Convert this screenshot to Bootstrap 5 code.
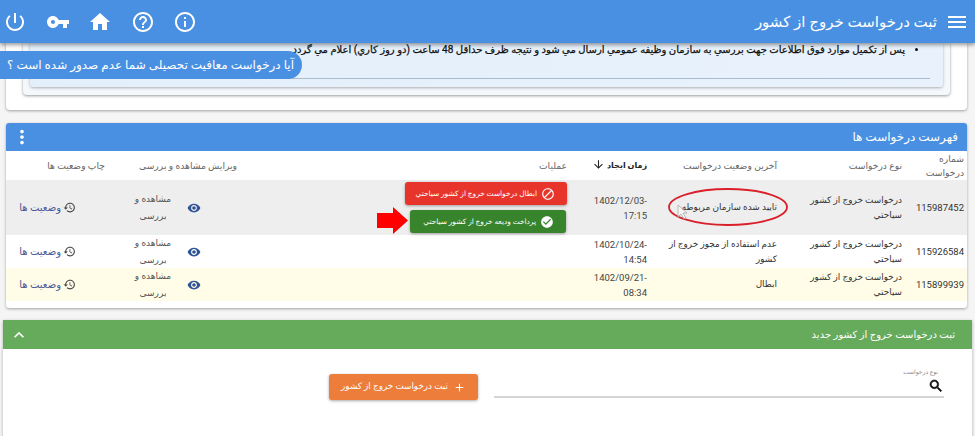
<!DOCTYPE html>
<html lang="fa" dir="rtl">

<head>
    <meta charset="UTF-8">
    <meta name="viewport" content="width=device-width, initial-scale=1.0">
    <title>ثبت درخواست خروج از کشور</title>
    <link href="https://cdn.jsdelivr.net/npm/bootstrap@5.3.0/dist/css/bootstrap.min.css" rel="stylesheet">
    <style>
        html, body {
            height: 436px;
            overflow: hidden;
        }

        body {
            background-color: #f5f5f5;
            color: #333;
            font-family: Roboto, "DejaVu Sans", sans-serif;
            font-size: 10px;
        }

        .icon {
            width: 24px;
            height: 24px;
            fill: currentColor;
            flex: none;
        }

        .app-bar {
            height: 43px;
            background-color: #4a90e2;
            color: #fff;
            box-shadow: 0 2px 4px rgba(0, 0, 0, .4);
            padding: 0 6px 0 3px;
            position: relative;
            z-index: 5;
        }

        .app-bar h1 {
            font-size: 15px;
            font-weight: 400;
            margin: 0 8px 0 0;
        }

        .bar-tools {
            gap: 18.5px;
            margin-right: auto;
            direction: ltr;
        }

        .notice-outer {
            height: 67px;
            margin: 0 8px 0 6px;
            padding: 0 17px 15px 17px;
            background-color: #fff;
            border-radius: 0 0 4px 4px;
            box-shadow: 0 1px 3px rgba(0, 0, 0, .35);
        }

        .notice-mid {
            height: 52px;
            padding: 0 7px 8px 7px;
            background-color: #f4f8fc;
            border-radius: 0 0 4px 4px;
            box-shadow: 0 1px 3px rgba(0, 0, 0, .4);
        }

        .notice-inner {
            height: 44px;
            background: linear-gradient(to left, #e9f2fc, #e3effb);
            border-radius: 0 0 4px 4px;
            box-shadow: 0 1px 3px rgba(0, 0, 0, .3);
            padding: 0 13px 8px 13px;
        }

        .notice-inner ul {
            margin: 0;
            padding: 0 25px 0 0;
            height: 36px;
            border-bottom: 1px solid #a9bccd;
            color: #111;
            font-size: 10px;
            -webkit-text-stroke: .25px #111;
            line-height: 14px;
            white-space: nowrap;
        }

        .ask-pill {
            position: absolute;
            left: 0;
            top: 51px;
            width: 302px;
            height: 28px;
            z-index: 3;
            background-color: #4a90e2;
            color: #fff;
            font-size: 12px;
            border-radius: 0 14px 14px 0;
            padding-right: 8px;
        }

        .list-panel {
            margin: 13px 8px 0 6px;
            height: 185px;
            background-color: #fff;
            border-radius: 3px;
            box-shadow: 0 1px 3px rgba(0, 0, 0, .35);
            overflow: hidden;
        }

        .list-head {
            height: 28px;
            background-color: #4a90e2;
            color: #fff;
            font-size: 12px;
            padding: 0 9px 0 5px;
        }

        .list-head .icon {
            width: 22px;
            height: 22px;
            margin-right: auto;
        }

        .req-table {
            width: 100%;
            table-layout: fixed;
            border-collapse: collapse;
            font-size: 8.9px;
            line-height: 15px;
        }

        .req-table th {
            height: 29px;
            font-size: 9.2px;
            line-height: 14px;
            font-weight: 400;
            color: #666;
            padding: 0 3px;
            text-align: right;
        }

        .req-table th.sorted {
            color: #222;
            font-size: 8px;
            font-weight: 700;
        }

        .req-table th .icon {
            width: 13px;
            height: 13px;
            margin-right: 2px;
            vertical-align: -3px;
        }

        .req-table td {
            padding: 0 3px;
            text-align: right;
            color: #333;
        }

        .req-table td.type-cell {
            padding-left: 14px;
        }

        .row-active td {
            height: 55px;
            background-color: #eeeeee;
        }

        .row-plain td {
            height: 33px;
            background-color: #fff;
        }

        .row-void td {
            height: 33px;
            background-color: #fffde7;
        }

        .status-cell {
            position: relative;
        }

        .req-table .num-cell {
            font-size: 9.5px;
        }

        .req-table .time-cell {
            font-size: 9.5px;
            color: #444;
        }

        .oval-mark {
            position: absolute;
            left: 18px;
            top: 8px;
            width: 120px;
            height: 38px;
            pointer-events: none;
        }

        .op-stack {
            position: relative;
            gap: 5px;
            align-items: flex-start;
        }

        .op-btn {
            height: 23px;
            border: 0;
            border-radius: 3px;
            color: #fff;
            font-size: 7.4px;
            padding: 0 12px 0 4px;
            box-shadow: 0 1px 3px rgba(0, 0, 0, .35);
            gap: 4px;
            white-space: nowrap;
        }

        .op-btn .icon {
            width: 14px;
            height: 14px;
        }

        .op-cancel {
            width: 162px;
            background-color: #e8352b;
        }

        .op-pay {
            width: 156px;
            margin-right: 1px;
            background-color: #37842c;
        }

        .red-arrow {
            position: absolute;
            top: 25px;
            right: 159px;
            width: 31px;
            height: 27px;
        }

        .view-link {
            gap: 14px;
            padding-right: 36px;
        }

        .view-link .icon {
            width: 14px;
            height: 14px;
            color: #2f5597;
        }

        .view-link span {
            width: 40px;
            height: 33px;
            text-align: center;
            font-size: 9px;
            color: #555;
            line-height: 17px;
        }

        .states-link {
            color: #4a5a9a;
            gap: 2px;
            font-size: 10px;
            margin-right: 29px;
        }

        .states-link .icon {
            width: 13px;
            height: 13px;
            color: #444;
        }

        .cursor-mark {
            position: absolute;
            left: 25px;
            top: 24px;
            width: 14px;
            height: 16px;
        }

        .new-panel {
            margin: 12px 3px 0 3px;
            height: 120px;
            background-color: #fff;
            box-shadow: 0 1px 3px rgba(0, 0, 0, .3);
        }

        .new-head {
            height: 29px;
            background-color: #66ab5b;
            color: #fff;
            font-size: 10px;
            font-weight: 500;
            padding: 0 17px 0 6px;
        }

        .new-head .icon {
            width: 20px;
            height: 20px;
            margin-right: auto;
        }

        .new-body {
            padding: 18px 28px 0 0;
            gap: 16px;
        }

        .type-field {
            width: 450px;
            height: 31px;
            border-bottom: 2px solid #d5d5d5;
            position: relative;
        }

        .type-field label {
            font-size: 6px;
            color: #888;
            display: block;
            line-height: 10px;
            padding-right: 6px;
        }

        .type-field .icon {
            position: absolute;
            right: 0;
            top: 11px;
            width: 16px;
            height: 16px;
            color: #111;
        }

        .add-btn {
            width: 149px;
            height: 26px;
            margin-top: 7px;
            border: 0;
            border-radius: 3px;
            background-color: #ed7d3a;
            color: #fff;
            font-size: 8.8px;
            gap: 5px;
            padding: 0 10px;
            box-shadow: 0 1px 3px rgba(0, 0, 0, .35);
            white-space: nowrap;
        }

        .add-btn .icon {
            width: 13px;
            height: 13px;
        }
    </style>
</head>

<body>
    <svg width="0" height="0" class="position-absolute">
        <symbol id="i-power" viewBox="0 0 24 24"><path d="M13 3h-2v10h2V3zm4.83 2.17l-1.42 1.42C17.99 7.86 19 9.81 19 12c0 3.87-3.13 7-7 7s-7-3.13-7-7c0-2.19 1.01-4.14 2.58-5.42L6.17 5.17C4.23 6.82 3 9.26 3 12c0 4.97 4.03 9 9 9s9-4.03 9-9c0-2.74-1.23-5.18-3.17-6.83z"/></symbol>
        <symbol id="i-key" viewBox="0 0 24 24"><path d="M12.65 10C11.83 7.67 9.61 6 7 6c-3.31 0-6 2.69-6 6s2.69 6 6 6c2.61 0 4.83-1.67 5.65-4H17v4h4v-4h2v-4H12.65zM7 14c-1.1 0-2-.9-2-2s.9-2 2-2 2 .9 2 2-.9 2-2 2z"/></symbol>
        <symbol id="i-home" viewBox="0 0 24 24"><path d="M10 20v-6h4v6h5v-8h3L12 3 2 12h3v8z"/></symbol>
        <symbol id="i-help" viewBox="0 0 24 24"><path d="M11 18h2v-2h-2v2zm1-16C6.48 2 2 6.48 2 12s4.48 10 10 10 10-4.48 10-10S17.52 2 12 2zm0 18c-4.41 0-8-3.59-8-8s3.59-8 8-8 8 3.59 8 8-3.59 8-8 8zm0-14c-2.21 0-4 1.79-4 4h2c0-1.1.9-2 2-2s2 .9 2 2c0 2-3 1.75-3 5h2c0-2.25 3-2.5 3-5 0-2.21-1.79-4-4-4z"/></symbol>
        <symbol id="i-info" viewBox="0 0 24 24"><path d="M11 17h2v-6h-2v6zm1-15C6.48 2 2 6.48 2 12s4.48 10 10 10 10-4.48 10-10S17.52 2 12 2zm0 18c-4.41 0-8-3.59-8-8s3.59-8 8-8 8 3.59 8 8-3.59 8-8 8zM11 9h2V7h-2v2z"/></symbol>
        <symbol id="i-menu" viewBox="0 0 24 24"><path d="M3 18h18v-2H3v2zm0-5h18v-2H3v2zm0-7v2h18V6H3z"/></symbol>
        <symbol id="i-more" viewBox="0 0 24 24"><path d="M12 8c1.1 0 2-.9 2-2s-.9-2-2-2-2 .9-2 2 .9 2 2 2zm0 2c-1.1 0-2 .9-2 2s.9 2 2 2 2-.9 2-2-.9-2-2-2zm0 6c-1.1 0-2 .9-2 2s.9 2 2 2 2-.9 2-2-.9-2-2-2z"/></symbol>
        <symbol id="i-eye" viewBox="0 0 24 24"><path d="M12 4.5C7 4.5 2.73 7.61 1 12c1.73 4.39 6 7.5 11 7.5s9.27-3.11 11-7.5c-1.73-4.39-6-7.5-11-7.5zM12 17c-2.76 0-5-2.24-5-5s2.24-5 5-5 5 2.24 5 5-2.24 5-5 5zm0-8c-1.66 0-3 1.34-3 3s1.34 3 3 3 3-1.34 3-3-1.34-3-3-3z"/></symbol>
        <symbol id="i-history" viewBox="0 0 24 24"><path d="M13 3c-4.97 0-9 4.03-9 9H1l3.89 3.89.07.14L9 12H6c0-3.87 3.13-7 7-7s7 3.13 7 7-3.13 7-7 7c-1.93 0-3.68-.79-4.94-2.06l-1.42 1.42C8.27 19.99 10.51 21 13 21c4.97 0 9-4.03 9-9s-4.03-9-9-9zm-1 5v5l4.28 2.54.72-1.21-3.5-2.08V8H12z"/></symbol>
        <symbol id="i-block" viewBox="0 0 24 24"><path d="M12 2C6.48 2 2 6.48 2 12s4.48 10 10 10 10-4.48 10-10S17.52 2 12 2zM4 12c0-4.42 3.58-8 8-8 1.85 0 3.55.63 4.9 1.69L5.69 16.9C4.63 15.55 4 13.85 4 12zm8 8c-1.85 0-3.55-.63-4.9-1.69L18.31 7.1C19.37 8.45 20 10.15 20 12c0 4.42-3.58 8-8 8z"/></symbol>
        <symbol id="i-check" viewBox="0 0 24 24"><path d="M12 2C6.48 2 2 6.48 2 12s4.48 10 10 10 10-4.48 10-10S17.52 2 12 2zm-2 15l-5-5 1.41-1.41L10 14.17l7.59-7.59L19 8l-9 9z"/></symbol>
        <symbol id="i-down" viewBox="0 0 24 24"><path d="M20 12l-1.41-1.41L13 16.17V4h-2v12.17l-5.58-5.58L4 12l8 8 8-8z"/></symbol>
        <symbol id="i-search" viewBox="0 0 24 24"><path d="M15.5 14h-.79l-.28-.27C15.41 12.59 16 11.11 16 9.5 16 5.91 13.09 3 9.5 3S3 5.91 3 9.5 5.91 16 9.5 16c1.61 0 3.09-.59 4.23-1.57l.27.28v.79l5 4.99L20.49 19l-4.99-5zm-6 0C7.01 14 5 11.99 5 9.5S7.01 5 9.5 5 14 7.01 14 9.5 11.99 14 9.5 14z" stroke="currentColor" stroke-width="1"/></symbol>
        <symbol id="i-up" viewBox="0 0 24 24"><path d="M12 8l-6 6 1.41 1.41L12 10.83l4.59 4.58L18 14z"/></symbol>
        <symbol id="i-add" viewBox="0 0 24 24"><path d="M19 13h-6v6h-2v-6H5v-2h6V5h2v6h6v2z"/></symbol>
    </svg>

    <header class="app-bar d-flex align-items-center">
        <svg class="icon"><use href="#i-menu"/></svg>
        <h1>ثبت درخواست خروج از کشور</h1>
        <div class="bar-tools d-flex align-items-center">
            <svg class="icon"><use href="#i-power"/></svg>
            <svg class="icon"><use href="#i-key"/></svg>
            <svg class="icon"><use href="#i-home"/></svg>
            <svg class="icon"><use href="#i-help"/></svg>
            <svg class="icon"><use href="#i-info"/></svg>
        </div>
    </header>

    <div class="ask-pill d-flex align-items-center">آیا درخواست معافیت تحصیلی شما عدم صدور شده است ؟</div>

    <section class="notice-outer">
        <div class="notice-mid">
            <div class="notice-inner">
                <ul>
                    <li>پس از تکميل موارد فوق اطلاعات جهت بررسي به سازمان وظيفه عمومي ارسال مي شود و نتيجه ظرف حداقل 48 ساعت (دو روز کاري) اعلام مي گردد</li>
                </ul>
            </div>
        </div>
    </section>

    <section class="list-panel">
        <div class="list-head d-flex align-items-center">
            <span>فهرست درخواست ها</span>
            <svg class="icon"><use href="#i-more"/></svg>
        </div>
        <table class="req-table">
            <colgroup>
                <col style="width: 62px">
                <col style="width: 125px">
                <col style="width: 130px">
                <col style="width: 80px">
                <col style="width: 330px">
                <col style="width: 132px">
                <col>
            </colgroup>
            <thead>
                <tr>
                    <th>شماره درخواست</th>
                    <th>نوع درخواست</th>
                    <th>آخرین وضعیت درخواست</th>
                    <th class="sorted">زمان ایجاد<svg class="icon"><use href="#i-down"/></svg></th>
                    <th>عملیات</th>
                    <th>ویرایش مشاهده و بررسی</th>
                    <th>چاپ وضعیت ها</th>
                </tr>
            </thead>
            <tbody>
                <tr class="row-active">
                    <td class="num-cell">115987452</td>
                    <td class="type-cell">درخواست خروج از کشور سياحتي</td>
                    <td class="status-cell"><span>تایید شده سازمان مربوطه</span><svg class="oval-mark" viewBox="0 0 120 38"><ellipse cx="60" cy="19" rx="59" ry="18" fill="none" stroke="#d9202a" stroke-width="1.8"/></svg><svg class="cursor-mark" viewBox="0 0 14 16"><path d="M3 1v12l3-3 3 5 2-1-3-5h4z" fill="#fff" fill-opacity=".4" stroke="#aaa" stroke-width=".8"/></svg></td>
                    <td class="time-cell">1402/12/03-17:15</td>
                    <td>
                        <div class="op-stack d-flex flex-column">
                            <button class="op-btn op-cancel d-flex align-items-center">
                                <svg class="icon"><use href="#i-block"/></svg>ابطال درخواست خروج از کشور سیاحتي
                            </button>
                            <button class="op-btn op-pay d-flex align-items-center">
                                <svg class="icon"><use href="#i-check"/></svg>پرداخت ودیعه خروج از کشور سیاحتي
                            </button>
                            <svg class="red-arrow" viewBox="0 0 31 27"><path d="M31 13.500 16 0v6H0v15h16v6z" fill="#ff0000"/></svg>
                        </div>
                    </td>
                    <td>
                        <a class="view-link d-flex align-items-center text-decoration-none"><svg class="icon"><use href="#i-eye"/></svg><span>مشاهده و بررسی</span></a>
                    </td>
                    <td>
                        <a class="states-link d-flex align-items-center text-decoration-none"><svg class="icon"><use href="#i-history"/></svg>وضعیت ها</a>
                    </td>
                </tr>
                <tr class="row-plain">
                    <td class="num-cell">115926584</td>
                    <td class="type-cell">درخواست خروج از کشور سياحتي</td>
                    <td>عدم استفاده از مجوز خروج از کشور</td>
                    <td class="time-cell">1402/10/24-14:54</td>
                    <td></td>
                    <td>
                        <a class="view-link d-flex align-items-center text-decoration-none"><svg class="icon"><use href="#i-eye"/></svg><span>مشاهده و بررسی</span></a>
                    </td>
                    <td>
                        <a class="states-link d-flex align-items-center text-decoration-none"><svg class="icon"><use href="#i-history"/></svg>وضعیت ها</a>
                    </td>
                </tr>
                <tr class="row-void">
                    <td class="num-cell">115899939</td>
                    <td class="type-cell">درخواست خروج از کشور سياحتي</td>
                    <td>ابطال</td>
                    <td class="time-cell">1402/09/21-08:34</td>
                    <td></td>
                    <td>
                        <a class="view-link d-flex align-items-center text-decoration-none"><svg class="icon"><use href="#i-eye"/></svg><span>مشاهده و بررسی</span></a>
                    </td>
                    <td>
                        <a class="states-link d-flex align-items-center text-decoration-none"><svg class="icon"><use href="#i-history"/></svg>وضعیت ها</a>
                    </td>
                </tr>
            </tbody>
        </table>
    </section>

    <section class="new-panel">
        <div class="new-head d-flex align-items-center">
            <span>ثبت درخواست خروج از کشور جدید</span>
            <svg class="icon"><use href="#i-up"/></svg>
        </div>
        <div class="new-body d-flex align-items-start">
            <div class="type-field">
                <label>نوع درخواست</label>
                <svg class="icon"><use href="#i-search"/></svg>
            </div>
            <button class="add-btn d-flex align-items-center justify-content-center">
                <svg class="icon"><use href="#i-add"/></svg>ثبت درخواست خروج از کشور
            </button>
        </div>
    </section>

    <script src="https://cdn.jsdelivr.net/npm/bootstrap@5.3.0/dist/js/bootstrap.bundle.min.js"></script>
</body>

</html>
